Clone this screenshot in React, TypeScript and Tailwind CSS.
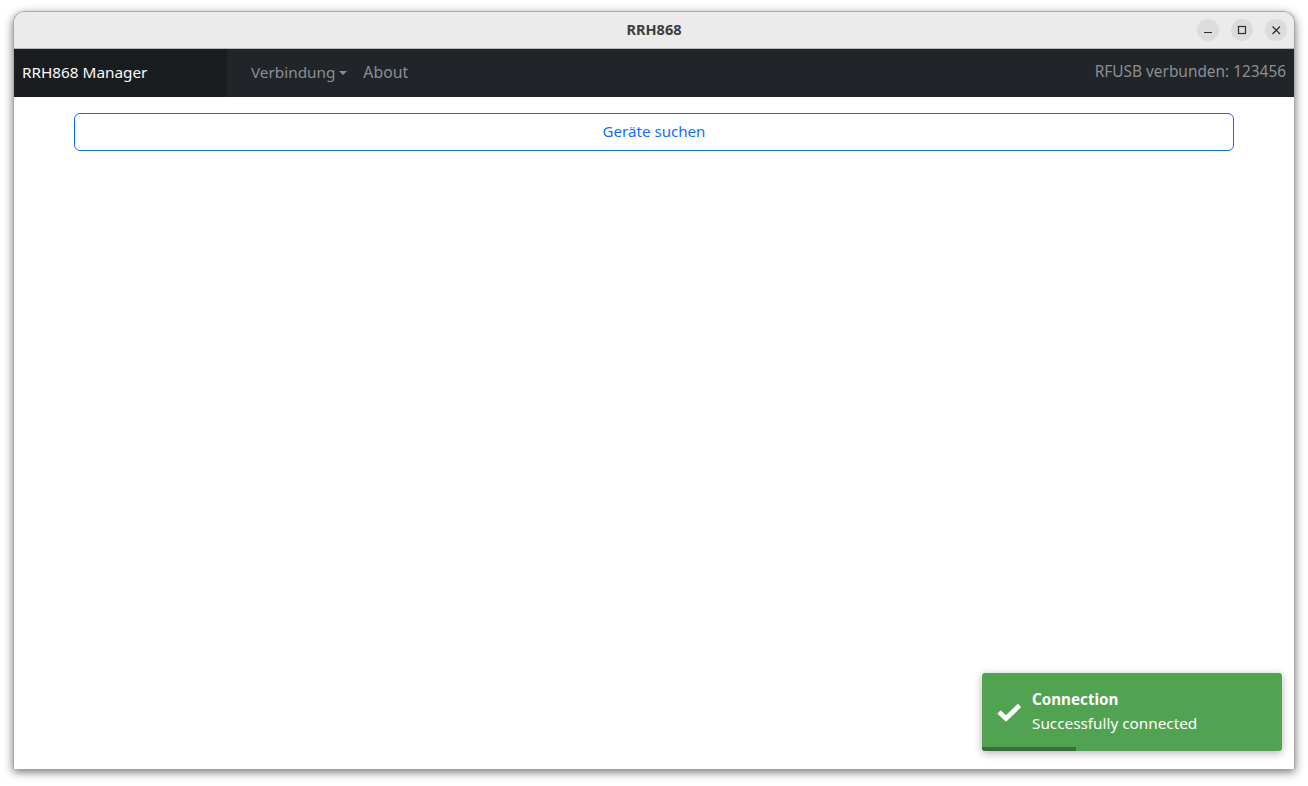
import React from 'react';

const font = "[font-family:'Noto_Sans',sans-serif]";

const TitleButton: React.FC<{ children: React.ReactNode }> = ({ children }) => (
  <div className="flex h-[22px] w-[22px] items-center justify-center rounded-full bg-[#dcdcdc]">
    <svg width="22" height="22" viewBox="0 0 22 22" fill="none" stroke="#2e2e2e" strokeWidth="1.2">
      {children}
    </svg>
  </div>
);

const Toast: React.FC = () => (
  <div className="absolute bottom-[18px] right-[12px] flex h-[78px] w-[300px] items-center overflow-hidden rounded-[3px] bg-[#51a351] pl-[15px] text-white shadow-[0_2px_8px_rgba(0,0,0,0.3)]">
    <svg width="24" height="20" viewBox="0 0 24 20" className="mr-[11px] -mt-[1px] shrink-0">
      <path d="M2 10 L9 16.5 L22.5 3.5" fill="none" stroke="#ffffff" strokeWidth="4.6" />
    </svg>
    <div className="-mt-[3px]">
      <div className="text-[15.2px] leading-[24px] font-bold">Connection</div>
      <div className="text-[15.3px] leading-[24px]">Successfully connected</div>
    </div>
    <div className="absolute bottom-0 left-0 h-[4px] w-[94px] bg-[#386f38]" />
  </div>
);

export default function App() {
  return (
    <div className={`h-[786px] w-[1308px] overflow-hidden bg-white pl-[13px] pt-[11px] ${font}`}>
      <div className="relative flex h-[758px] w-[1282px] flex-col overflow-hidden rounded-t-[12px] border border-b-0 border-[#a8a8a8] bg-white shadow-[0_3px_10px_rgba(0,0,0,0.55)]">
        <div className="relative flex h-[37px] shrink-0 items-center justify-end gap-[12px] border-b border-[#b8b8b8] bg-[#ebebeb] pr-[7px]">
          <div className="absolute inset-0 flex items-center justify-center text-[14.5px] font-bold text-[#3d3d3d]">
            RRH868
          </div>
          <TitleButton>
            <path d="M7 13.5 H15" />
          </TitleButton>
          <TitleButton>
            <rect x="7.5" y="7.5" width="7" height="7" />
          </TitleButton>
          <TitleButton>
            <path d="M7.5 7.5 L15 15 M15 7.5 L7.5 15" />
          </TitleButton>
        </div>

        <nav className="flex h-[48px] shrink-0 items-center bg-[#212529]">
          <div className="flex h-full w-[213px] items-center bg-[#1a1d20] pb-[2px] pl-[8px] text-[15.3px] text-[#f8f9fa]">
            RRH868 Manager
          </div>
          <div className="ml-[24px] flex items-center pb-[2px] text-[#8b8f93]">
            <span className="text-[15.3px]">Verbindung</span>
            <span className="ml-[4px] mt-[2px] h-0 w-0 border-x-[4px] border-t-[4px] border-x-transparent border-t-[#8b8f93]" />
            <span className="ml-[16px] mt-[1px] text-[15.8px]">About</span>
          </div>
          <div className="ml-auto pb-[2px] pr-[8px] text-[15.4px] text-[#8b8f93]">RFUSB verbunden: 123456</div>
        </nav>

        <div className="flex-1 px-[60px] pt-[16px]">
          <button className="h-[38px] w-[1160px] rounded-[6px] border border-[#0d6efd] bg-white pb-[2px] text-[15.1px] text-[#0d6efd]">
            Geräte suchen
          </button>
        </div>

        <Toast />
      </div>
    </div>
  );
}
